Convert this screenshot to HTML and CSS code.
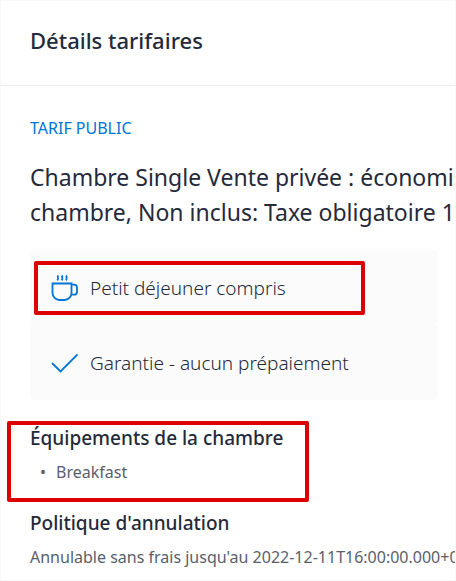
FILE: index.html
```html
<!DOCTYPE html>
<html lang="fr">
<head>
  <meta charset="UTF-8">
  <meta name="viewport" content="width=device-width, initial-scale=1">
  <title>Détails tarifaires</title>
  <link rel="stylesheet" href="styles.css">
</head>
<body>
  <header class="header">
    <h1>Détails tarifaires</h1>
  </header>
  <main class="content">
    <p class="rate-type">TARIF PUBLIC</p>
    <h2 class="rate-name">Chambre Single Vente privée : économis<br>chambre, Non inclus: Taxe obligatoire 1</h2>

    <ul class="perks">
      <li class="perk">
        <svg class="icon" viewBox="0 0 28 28" aria-hidden="true">
          <path d="M2.500 9.500h19v9.500a7 7 0 0 1-7 7h-5a7 7 0 0 1-7-7zM21.500 10.700h2.500a3 3 0 0 1 3 3v4a3 3 0 0 1-3 3h-3"/>
          <path d="M8.500 1.500q-1.200 1-.6 2.200t-.6 2.600M12.800 1.500q-1.200 1-.6 2.200t-.6 2.600M17.100 1.500q-1.200 1-.6 2.200t-.6 2.600"/>
        </svg>
        <span>Petit déjeuner compris</span>
        <span class="marker marker-perk"></span>
      </li>
      <li class="perk">
        <svg class="icon" viewBox="0 0 28 28" aria-hidden="true">
          <path d="M2 14l8.500 8.500L27.500 5.500"/>
        </svg>
        <span>Garantie - aucun prépaiement</span>
      </li>
    </ul>

    <section class="block">
      <h3>Équipements de la chambre</h3>
      <ul class="amenities">
        <li>Breakfast</li>
      </ul>
      <span class="marker marker-block"></span>
    </section>

    <section class="block">
      <h3>Politique d'annulation</h3>
      <p>Annulable sans frais jusqu'au 2022-12-11T16:00:00.000+0</p>
    </section>
  </main>
</body>
</html>
```
FILE: styles.css
```css
* {
  box-sizing: border-box;
}
body {
  margin: 0;
  min-height: 100vh;
  border: 1px solid #f8f8f8;
  background: #fff;
  color: #252a3a;
  font-family: "Noto Sans", "Open Sans", sans-serif;
  overflow: hidden;
}
h1, h2, h3, p, ul {
  margin: 0;
  padding: 0;
  font-weight: 400;
}
ul {
  list-style: none;
}
.header {
  padding: 23px 29px 29px;
  border-bottom: 1px solid #ececee;
}
h1 {
  font-size: 22px;
  font-weight: 500;
  line-height: 32px;
}
.content {
  padding: 30px 17px 0 29px;
}
.rate-type {
  color: #0074d9;
  font-size: 16px;
  line-height: 24px;
}
.rate-name {
  margin: 20px 0;
  font-size: 23px;
  line-height: 35px;
  white-space: nowrap;
}
.perk {
  position: relative;
  display: flex;
  align-items: center;
  gap: 12px;
  height: 75px;
  padding: 0 20px;
  border-radius: 5px;
  background: #fbfbfb;
  font-size: 19px;
  font-weight: 300;
}
.icon {
  width: 28px;
  height: 28px;
  fill: none;
  stroke: #0074d9;
  stroke-width: 1.8;
}
/* red frames drawn over the content */
.marker {
  position: absolute;
  border: 4px solid #dc0000;
  border-radius: 2px;
}
.marker-perk {
  top: 11px;
  left: 4px;
  right: 73px;
  height: 54px;
}
.marker-block {
  top: -4px;
  left: -23px;
  right: 129px;
  bottom: -17px;
}
.block {
  position: relative;
  margin-top: 25px;
  font-size: 16px;
  line-height: 26px;
  white-space: nowrap;
}
h3 {
  margin-bottom: 8px;
  font-size: 19px;
  font-weight: 500;
  line-height: 26px;
}
.block p,
.amenities {
  color: #5a5e6b;
}
.amenities li {
  display: flex;
  padding-left: 10px;
}
.amenities li::before {
  content: "•";
  width: 16px;
}
```
